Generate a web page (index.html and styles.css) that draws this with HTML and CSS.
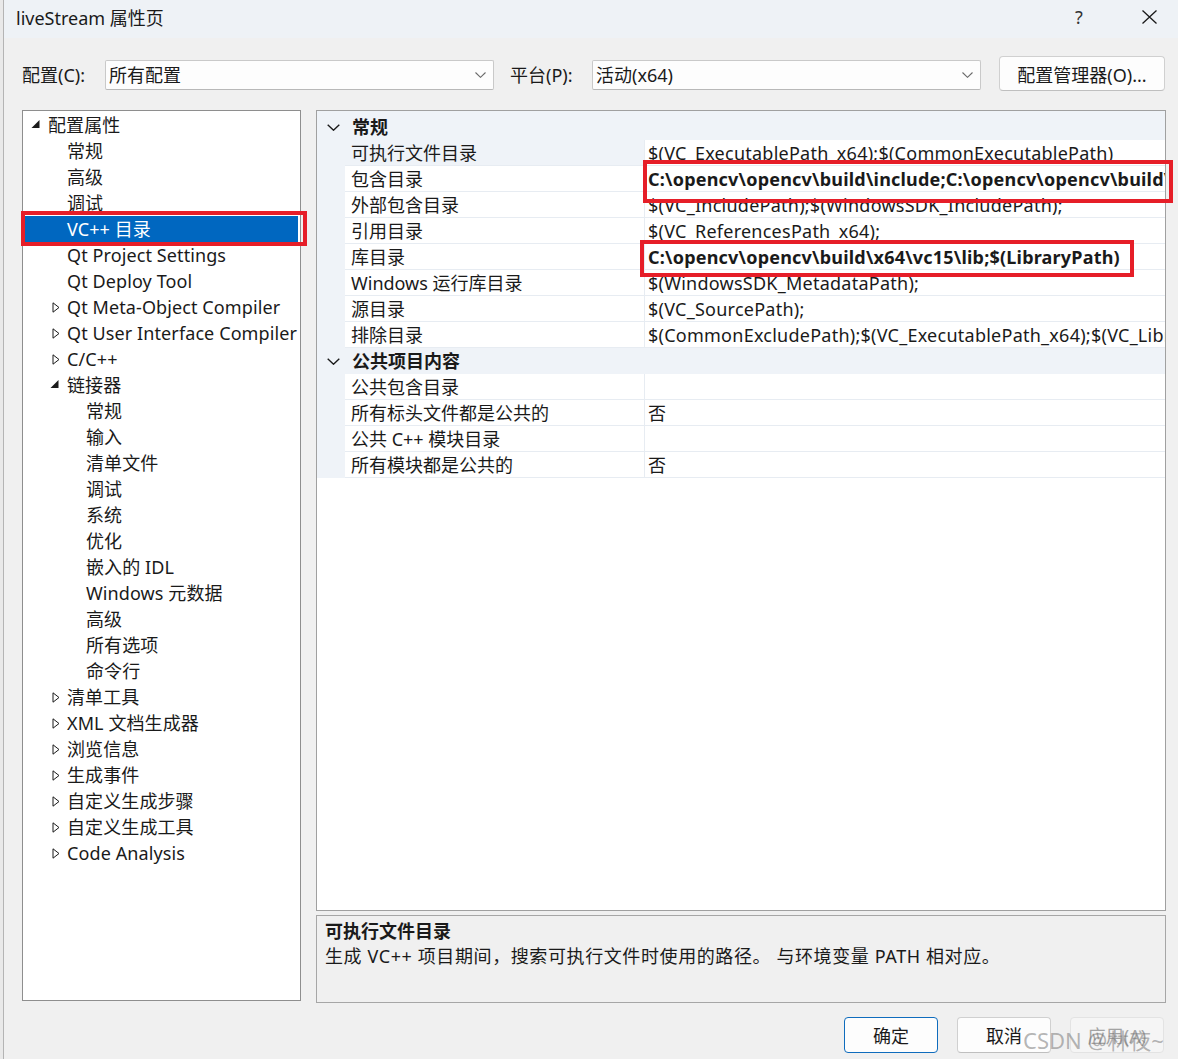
FILE: index.html
```html
<!DOCTYPE html>
<html lang="zh-CN">
<head>
<meta charset="utf-8">
<title>liveStream 属性页</title>
<link rel="stylesheet" href="styles.css">
</head>
<body>
<div class="win">
  <header class="titlebar">
    <span class="title">liveStream 属性页</span>
    <div class="tb-btns">
      <span class="tbtn help">?</span>
      <span class="tbtn"><svg width="17" height="14" viewBox="0 0 17 14"><path d="M1.5 0.5 L15.5 13.5 M15.5 0.5 L1.5 13.5" stroke="#1a1a1a" stroke-width="1.3" fill="none"/></svg></span>
    </div>
  </header>

  <div class="configrow">
    <span class="lbl lbl-cfg">配置(C):</span>
    <div class="select"><span class="sel-text">所有配置</span><svg class="chev" width="11" height="6" viewBox="0 0 11 6"><path d="M0.5 0.5 L5.5 5.3 L10.5 0.5" stroke="#6a6a6a" stroke-width="1.1" fill="none"/></svg></div>
    <span class="lbl lbl-plat">平台(P):</span>
    <div class="select"><span class="sel-text">活动(x64)</span><svg class="chev" width="11" height="6" viewBox="0 0 11 6"><path d="M0.5 0.5 L5.5 5.3 L10.5 0.5" stroke="#6a6a6a" stroke-width="1.1" fill="none"/></svg></div>
    <button class="btn btn-mgr">配置管理器(O)...</button>
  </div>

  <div class="main">
    <div class="tree">
      <div class="trow l0"><span class="tw"><svg width="9" height="8" viewBox="0 0 9 8"><path d="M8.5 0 L8.5 8 L0.5 8 Z" fill="#1a1a1a"/></svg></span><span>配置属性</span></div>
      <div class="trow l1"><span class="tw"></span><span>常规</span></div>
      <div class="trow l1"><span class="tw"></span><span>高级</span></div>
      <div class="trow l1"><span class="tw"></span><span>调试</span></div>
      <div class="trow l1 sel"><span class="tw"></span><span>VC++ 目录</span></div>
      <div class="trow l1"><span class="tw"></span><span>Qt Project Settings</span></div>
      <div class="trow l1"><span class="tw"></span><span>Qt Deploy Tool</span></div>
      <div class="trow l1"><span class="tw"><svg class="tri" width="8" height="11" viewBox="0 0 8 11"><path d="M1 0.8 L7 5.5 L1 10.2 Z" fill="none" stroke="#1a1a1a" stroke-width="1"/></svg></span><span>Qt Meta-Object Compiler</span></div>
      <div class="trow l1"><span class="tw"><svg class="tri" width="8" height="11" viewBox="0 0 8 11"><path d="M1 0.8 L7 5.5 L1 10.2 Z" fill="none" stroke="#1a1a1a" stroke-width="1"/></svg></span><span>Qt User Interface Compiler</span></div>
      <div class="trow l1"><span class="tw"><svg class="tri" width="8" height="11" viewBox="0 0 8 11"><path d="M1 0.8 L7 5.5 L1 10.2 Z" fill="none" stroke="#1a1a1a" stroke-width="1"/></svg></span><span>C/C++</span></div>
      <div class="trow l1"><span class="tw"><svg width="9" height="8" viewBox="0 0 9 8"><path d="M8.5 0 L8.5 8 L0.5 8 Z" fill="#1a1a1a"/></svg></span><span>链接器</span></div>
      <div class="trow l2"><span class="tw"></span><span>常规</span></div>
      <div class="trow l2"><span class="tw"></span><span>输入</span></div>
      <div class="trow l2"><span class="tw"></span><span>清单文件</span></div>
      <div class="trow l2"><span class="tw"></span><span>调试</span></div>
      <div class="trow l2"><span class="tw"></span><span>系统</span></div>
      <div class="trow l2"><span class="tw"></span><span>优化</span></div>
      <div class="trow l2"><span class="tw"></span><span>嵌入的 IDL</span></div>
      <div class="trow l2"><span class="tw"></span><span>Windows 元数据</span></div>
      <div class="trow l2"><span class="tw"></span><span>高级</span></div>
      <div class="trow l2"><span class="tw"></span><span>所有选项</span></div>
      <div class="trow l2"><span class="tw"></span><span>命令行</span></div>
      <div class="trow l1"><span class="tw"><svg class="tri" width="8" height="11" viewBox="0 0 8 11"><path d="M1 0.8 L7 5.5 L1 10.2 Z" fill="none" stroke="#1a1a1a" stroke-width="1"/></svg></span><span>清单工具</span></div>
      <div class="trow l1"><span class="tw"><svg class="tri" width="8" height="11" viewBox="0 0 8 11"><path d="M1 0.8 L7 5.5 L1 10.2 Z" fill="none" stroke="#1a1a1a" stroke-width="1"/></svg></span><span>XML 文档生成器</span></div>
      <div class="trow l1"><span class="tw"><svg class="tri" width="8" height="11" viewBox="0 0 8 11"><path d="M1 0.8 L7 5.5 L1 10.2 Z" fill="none" stroke="#1a1a1a" stroke-width="1"/></svg></span><span>浏览信息</span></div>
      <div class="trow l1"><span class="tw"><svg class="tri" width="8" height="11" viewBox="0 0 8 11"><path d="M1 0.8 L7 5.5 L1 10.2 Z" fill="none" stroke="#1a1a1a" stroke-width="1"/></svg></span><span>生成事件</span></div>
      <div class="trow l1"><span class="tw"><svg class="tri" width="8" height="11" viewBox="0 0 8 11"><path d="M1 0.8 L7 5.5 L1 10.2 Z" fill="none" stroke="#1a1a1a" stroke-width="1"/></svg></span><span>自定义生成步骤</span></div>
      <div class="trow l1"><span class="tw"><svg class="tri" width="8" height="11" viewBox="0 0 8 11"><path d="M1 0.8 L7 5.5 L1 10.2 Z" fill="none" stroke="#1a1a1a" stroke-width="1"/></svg></span><span>自定义生成工具</span></div>
      <div class="trow l1"><span class="tw"><svg class="tri" width="8" height="11" viewBox="0 0 8 11"><path d="M1 0.8 L7 5.5 L1 10.2 Z" fill="none" stroke="#1a1a1a" stroke-width="1"/></svg></span><span>Code Analysis</span></div>
    </div>

    <div class="rightcol">
      <div class="grid">
        <div class="ghead first"><span class="gchev"><svg width="13" height="7" viewBox="0 0 13 7"><path d="M0.7 0.7 L6.5 6.2 L12.3 0.7" stroke="#1a1a1a" stroke-width="1.4" fill="none"/></svg></span><span class="gname">常规</span></div>
        <div class="prow cur"><span class="gut"></span><span class="pname">可执行文件目录</span><span class="pval">$(VC_ExecutablePath_x64);$(CommonExecutablePath)</span></div>
        <div class="prow"><span class="gut"></span><span class="pname">包含目录</span><span class="pval bold">C:\opencv\opencv\build\include;C:\opencv\opencv\build\include\opencv2;$(IncludePath)</span></div>
        <div class="prow"><span class="gut"></span><span class="pname">外部包含目录</span><span class="pval">$(VC_IncludePath);$(WindowsSDK_IncludePath);</span></div>
        <div class="prow"><span class="gut"></span><span class="pname">引用目录</span><span class="pval">$(VC_ReferencesPath_x64);</span></div>
        <div class="prow"><span class="gut"></span><span class="pname">库目录</span><span class="pval bold">C:\opencv\opencv\build\x64\vc15\lib;$(LibraryPath)</span></div>
        <div class="prow"><span class="gut"></span><span class="pname">Windows 运行库目录</span><span class="pval">$(WindowsSDK_MetadataPath);</span></div>
        <div class="prow"><span class="gut"></span><span class="pname">源目录</span><span class="pval">$(VC_SourcePath);</span></div>
        <div class="prow"><span class="gut"></span><span class="pname">排除目录</span><span class="pval">$(CommonExcludePath);$(VC_ExecutablePath_x64);$(VC_LibraryPath_x64)</span></div>
        <div class="ghead"><span class="gchev"><svg width="13" height="7" viewBox="0 0 13 7"><path d="M0.7 0.7 L6.5 6.2 L12.3 0.7" stroke="#1a1a1a" stroke-width="1.4" fill="none"/></svg></span><span class="gname">公共项目内容</span></div>
        <div class="prow"><span class="gut"></span><span class="pname">公共包含目录</span><span class="pval"></span></div>
        <div class="prow"><span class="gut"></span><span class="pname">所有标头文件都是公共的</span><span class="pval">否</span></div>
        <div class="prow"><span class="gut"></span><span class="pname">公共 C++ 模块目录</span><span class="pval"></span></div>
        <div class="prow"><span class="gut"></span><span class="pname">所有模块都是公共的</span><span class="pval">否</span></div>
      </div>
      <div class="desc">
        <div class="desc-title">可执行文件目录</div>
        <div class="desc-text">生成 VC++ 项目期间，搜索可执行文件时使用的路径。 与环境变量 PATH 相对应。</div>
      </div>
    </div>
  </div>

  <div class="footer">
    <button class="btn fbtn default">确定</button>
    <button class="btn fbtn">取消</button>
    <button class="btn fbtn disabled">应用(A)</button>
  </div>
</div>

<div class="mark mark-tree"></div>
<div class="mark mark-inc"></div>
<div class="mark mark-lib"></div>
<div class="watermark">CSDN @林夜~</div>
</body>
</html>
```

FILE: styles.css
```css
* { box-sizing: border-box; margin: 0; padding: 0; }

html, body { width: 1178px; height: 1059px; overflow: hidden; }

body {
  position: relative;
  background: #e9e9e9;
  padding-left: 3px;
  font-family: "Noto Sans", "Noto Sans CJK SC", sans-serif;
  font-size: 18px;
  color: #1a1a1a;
}

.win {
  height: 1059px;
  background: #f0f0f0;
  border-left: 1px solid #b4b4b4;
  display: flex;
  flex-direction: column;
}

/* title bar */
.titlebar {
  height: 38px;
  flex: none;
  background: #eef2f6;
  display: flex;
  align-items: center;
  padding-left: 12px;
  padding-right: 5px;
}
.title { font-size: 18px; line-height: 1; padding-bottom: 3px; }
.tb-btns { margin-left: auto; display: flex; gap: 22px; }
.tbtn {
  width: 48px; height: 38px;
  display: flex; align-items: center; justify-content: center;
  padding-bottom: 5px;
}
.help { font-size: 18px; color: #333; }

/* config row */
.configrow {
  height: 72px;
  flex: none;
  display: flex;
  align-items: center;
  padding: 2px 0 0 18px;
}
.lbl { font-size: 18px; line-height: 30px; flex: none; }
.lbl-cfg { width: 83px; }
.lbl-plat { width: 82px; margin-left: 16px; }
.select {
  width: 389px; height: 30px; flex: none;
  background: #fdfdfd;
  border: 1px solid #c9c9c9;
  border-bottom-color: #b8b8b8;
  border-radius: 2px;
  display: flex; align-items: center;
  padding: 0 6px 0 3px;
}
.sel-text { line-height: 28px; }
.chev { margin-left: auto; margin-right: 1px; }
.btn {
  font-family: inherit;
  font-size: 18px;
  color: #1a1a1a;
  background: #fdfdfd;
  border: 1px solid #d0d0d0;
  border-bottom-color: #bfbfbf;
  border-radius: 4px;
}
.btn-mgr {
  width: 166px; height: 35px;
  margin: -3px 0 0 18px;
}

/* main area */
.main {
  display: flex;
  padding-left: 18px;
  height: 891px;
  flex: none;
}
.tree {
  width: 279px; height: 891px;
  background: #fff;
  border: 1px solid #8e8e8e;
  padding-top: 1px;
  overflow: hidden;
}
.trow {
  height: 26px;
  display: flex; align-items: center;
  white-space: nowrap;
  line-height: 26px;
  letter-spacing: 0.1px;
}
.trow.l0 { padding-left: 8px; }
.trow.l1 { padding-left: 27px; }
.trow.l2 { padding-left: 46px; }
.tw { width: 17px; flex: none; display: flex; align-items: center; }
.tw svg { margin-top: -2px; }
.tw .tri { margin-left: 2px; margin-top: 0; }
.trow.sel {
  background: #0067c0;
  color: #fff;
  margin: 0 2px 0 1px;
  padding-left: 26px;
}

.rightcol {
  margin-left: 15px;
  width: 850px;
  display: flex;
  flex-direction: column;
  gap: 4px;
}
.grid {
  height: 801px;
  flex: none;
  background: #fff;
  border: 1px solid #a0a0a0;
  overflow: hidden;
}
.ghead {
  height: 26px;
  background: #eff3f8;
  display: flex; align-items: center;
}
.ghead.first { height: 29px; padding-top: 3px; }
.gchev { width: 35px; flex: none; padding-left: 10px; display: flex; align-items: center; }
.gname { font-weight: 700; line-height: 26px; }

.prow {
  height: 26px;
  display: grid;
  grid-template-columns: 28px 299px 1fr;
  line-height: 27px;
}
.gut { background: #eff3f8; }
.pname {
  padding-left: 6px;
  border-bottom: 1px solid #e7ecf2;
  white-space: nowrap;
  overflow: hidden;
}
.prow.cur .pname { background: #eff3f8; }
.pval {
  padding-left: 3px;
  border-left: 1px solid #e7ecf2;
  border-bottom: 1px solid #e7ecf2;
  white-space: nowrap;
  overflow: hidden;
  letter-spacing: 0.25px;
}
.pval.bold { font-weight: 700; letter-spacing: 0.2px; }

.desc {
  height: 88px;
  flex: none;
  background: #f0f0f0;
  border: 1px solid #a6a6a6;
  padding: 3px 8px 0;
}
.desc-title { font-weight: 700; line-height: 24px; }
.desc-text { line-height: 26px; letter-spacing: 0.6px; }

/* footer */
.footer {
  display: flex;
  justify-content: flex-end;
  gap: 19px;
  padding: 16px 14px 0 0;
}
.fbtn { width: 94px; height: 36px; }
.fbtn.default { border: 1px solid #0f6cbd; }
.fbtn.disabled { background: #f5f5f5; border-color: #e3e3e3; color: #a3a3a3; }

/* annotation overlays */
.mark {
  position: absolute;
  border: 4px solid #e61e28;
  pointer-events: none;
}
.mark-tree { left: 21px; top: 211px; width: 286px; height: 35px; }
.mark-inc { left: 643px; top: 160px; width: 530px; height: 43px; }
.mark-lib { left: 640px; top: 240px; width: 494px; height: 37px; }

.watermark {
  position: absolute;
  left: 1023px;
  top: 1025px;
  font-size: 22px;
  line-height: 30px;
  color: rgba(120, 120, 120, 0.55);
  white-space: nowrap;
  pointer-events: none;
}
```
